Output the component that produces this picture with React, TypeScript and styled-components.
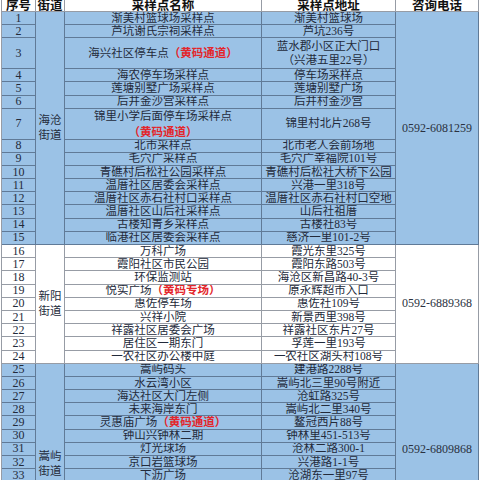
import React from "react";
import styled, { createGlobalStyle } from "styled-components";

const GlobalStyle = createGlobalStyle`
  html, body {
    margin: 0;
    padding: 0;
    background: #ffffff;
    overflow: hidden;
  }
  body {
    font-family: "Liberation Serif", "Noto Sans CJK SC", serif;
  }
`;

const BLUE = "#9bc2e6";
const WHITE = "#ffffff";
const LINE = "rgba(25, 35, 55, 0.45)";
const ROW_H = 13.2;
const TALL_H = 30.8;

type Row = {
  no: number;
  name: React.ReactNode;
  addr: React.ReactNode;
  tall?: boolean;
};

type Section = {
  street: [string, string];
  phone: string;
  bg: string;
  streetShift: number;
  phoneShift: number;
  rows: Row[];
};

const Sheet = styled.div<{ $rows: string }>`
  display: grid;
  grid-template-columns: 34px 29px 197px 134px 83px;
  grid-template-rows: ${(p) => p.$rows};
  width: max-content;
  margin-left: 1px;
  border-left: 1px solid ${LINE};
`;

const Cell = styled.div<{ $col: number; $bg: string; $span?: number; $shift?: number }>`
  grid-column: ${(p) => p.$col};
  grid-row: span ${(p) => p.$span ?? 1};
  box-sizing: border-box;
  display: flex;
  align-items: center;
  justify-content: center;
  padding-top: ${(p) => p.$shift ?? 0}px;
  background: ${(p) => p.$bg};
  border-right: 1px solid ${LINE};
  border-bottom: 1px solid ${LINE};
  color: #232a3a;
  font-size: 11.5px;
  line-height: 13px;
  text-align: center;
  white-space: nowrap;
  overflow: hidden;
`;

const HeadCell = styled(Cell)`
  align-items: flex-end;
  color: #111111;
  font-size: 12.5px;
  font-weight: 700;
  line-height: 9px;
`;

const Num = styled.span`
  font-size: 12px;
`;

const TwoLine = styled.span<{ $gap: number }>`
  line-height: ${(p) => p.$gap}px;
`;

const Alert = styled.span`
  color: #e3262b;
  font-weight: 700;
`;

const Phone = styled.span`
  font-size: 12px;
  color: #2a3140;
`;

const sections: Section[] = [
  {
    street: ["海沧", "街道"],
    phone: "0592-6081259",
    bg: BLUE,
    streetShift: 0,
    phoneShift: 0,
    rows: [
      { no: 1, name: "渐美村篮球场采样点", addr: "渐美村篮球场" },
      { no: 2, name: "芦坑谢氏宗祠采样点", addr: "芦坑236号" },
      {
        no: 3,
        name: (
          <>
            海兴社区停车点<Alert>（黄码通道）</Alert>
          </>
        ),
        addr: (
          <TwoLine $gap={14}>
            蓝水郡小区正大门口
            <br />
            （兴港五里22号）
          </TwoLine>
        ),
        tall: true,
      },
      { no: 4, name: "海农停车场采样点", addr: "停车场采样点" },
      { no: 5, name: "莲塘别墅广场采样点", addr: "莲塘别墅广场" },
      { no: 6, name: "后井金沙宫采样点", addr: "后井村金沙宫" },
      {
        no: 7,
        name: (
          <TwoLine $gap={16}>
            锦里小学后面停车场采样点
            <br />
            <Alert>（黄码通道）</Alert>
          </TwoLine>
        ),
        addr: "锦里村北片268号",
        tall: true,
      },
      { no: 8, name: "北市采样点", addr: "北市老人会前场地" },
      { no: 9, name: "毛穴广采样点", addr: "毛穴广幸福院101号" },
      { no: 10, name: "青礁村后松社公园采样点", addr: "青礁村后松社大桥下公园" },
      { no: 11, name: "温厝社区居委会采样点", addr: "兴港一里318号" },
      { no: 12, name: "温厝社区赤石社村口采样点", addr: "温厝社区赤石社村口空地" },
      { no: 13, name: "温厝社区山后社采样点", addr: "山后社祖厝" },
      { no: 14, name: "古楼知青乡采样点", addr: "古楼社83号" },
      { no: 15, name: "临港社区居委会采样点", addr: "慈济一里101-2号" },
    ],
  },
  {
    street: ["新阳", "街道"],
    phone: "0592-6889368",
    bg: WHITE,
    streetShift: 0,
    phoneShift: 0,
    rows: [
      { no: 16, name: "万科广场", addr: "霞光东里325号" },
      { no: 17, name: "霞阳社区市民公园", addr: "霞阳东路503号" },
      { no: 18, name: "环保监测站", addr: "海沧区新昌路40-3号" },
      {
        no: 19,
        name: (
          <>
            悦实广场<Alert>（黄码专场）</Alert>
          </>
        ),
        addr: "原永辉超市入口",
      },
      { no: 20, name: "惠佐停车场", addr: "惠佐社109号" },
      { no: 21, name: "兴祥小院", addr: "新景西里398号" },
      { no: 22, name: "祥露社区居委会广场", addr: "祥露社区东片27号" },
      { no: 23, name: "居住区一期东门", addr: "孚莲一里193号" },
      { no: 24, name: "一农社区办公楼中庭", addr: "一农社区湖头村108号" },
    ],
  },
  {
    street: ["嵩屿", "街道"],
    phone: "0592-6809868",
    bg: BLUE,
    streetShift: 83,
    phoneShift: 53,
    rows: [
      { no: 25, name: "嵩屿码头", addr: "建港路2288号" },
      { no: 26, name: "水云湾小区", addr: "嵩屿北三里90号附近" },
      { no: 27, name: "海达社区大门左侧", addr: "沧虹路325号" },
      { no: 28, name: "未来海岸东门", addr: "嵩屿北二里340号" },
      {
        no: 29,
        name: (
          <>
            灵惠庙广场<Alert>（黄码通道）</Alert>
          </>
        ),
        addr: "鳌冠西片88号",
      },
      { no: 30, name: "钟山兴钟林二期", addr: "钟林里451-513号" },
      { no: 31, name: "灯光球场", addr: "沧林二路300-1" },
      { no: 32, name: "京口岩篮球场", addr: "兴港路1-1号" },
      { no: 33, name: "下沥广场", addr: "沧湖东一里97号" },
    ],
  },
];

const headers = ["序号", "街道", "采样点名称", "采样点地址", "咨询电话"];

export default function App() {
  const allRows = sections.flatMap((s) => s.rows);
  const template = ["12px", ...allRows.map((r) => `${r.tall ? TALL_H : ROW_H}px`)].join(" ");

  return (
    <>
      <GlobalStyle />
      <Sheet $rows={template}>
        {headers.map((h, i) => (
          <HeadCell key={h} $col={i + 1} $bg={WHITE}>
            {h}
          </HeadCell>
        ))}

        {sections.map((sec) =>
          sec.rows.map((row, i) => (
            <React.Fragment key={row.no}>
              <Cell $col={1} $bg={sec.bg}>
                <Num>{row.no}</Num>
              </Cell>
              {i === 0 && (
                <Cell $col={2} $bg={sec.bg} $span={sec.rows.length} $shift={sec.streetShift}>
                  <TwoLine $gap={15}>
                    {sec.street[0]}
                    <br />
                    {sec.street[1]}
                  </TwoLine>
                </Cell>
              )}
              <Cell $col={3} $bg={sec.bg}>
                {row.name}
              </Cell>
              <Cell $col={4} $bg={sec.bg}>
                {row.addr}
              </Cell>
              {i === 0 && (
                <Cell $col={5} $bg={sec.bg} $span={sec.rows.length} $shift={sec.phoneShift}>
                  <Phone>{sec.phone}</Phone>
                </Cell>
              )}
            </React.Fragment>
          ))
        )}
      </Sheet>
    </>
  );
}
